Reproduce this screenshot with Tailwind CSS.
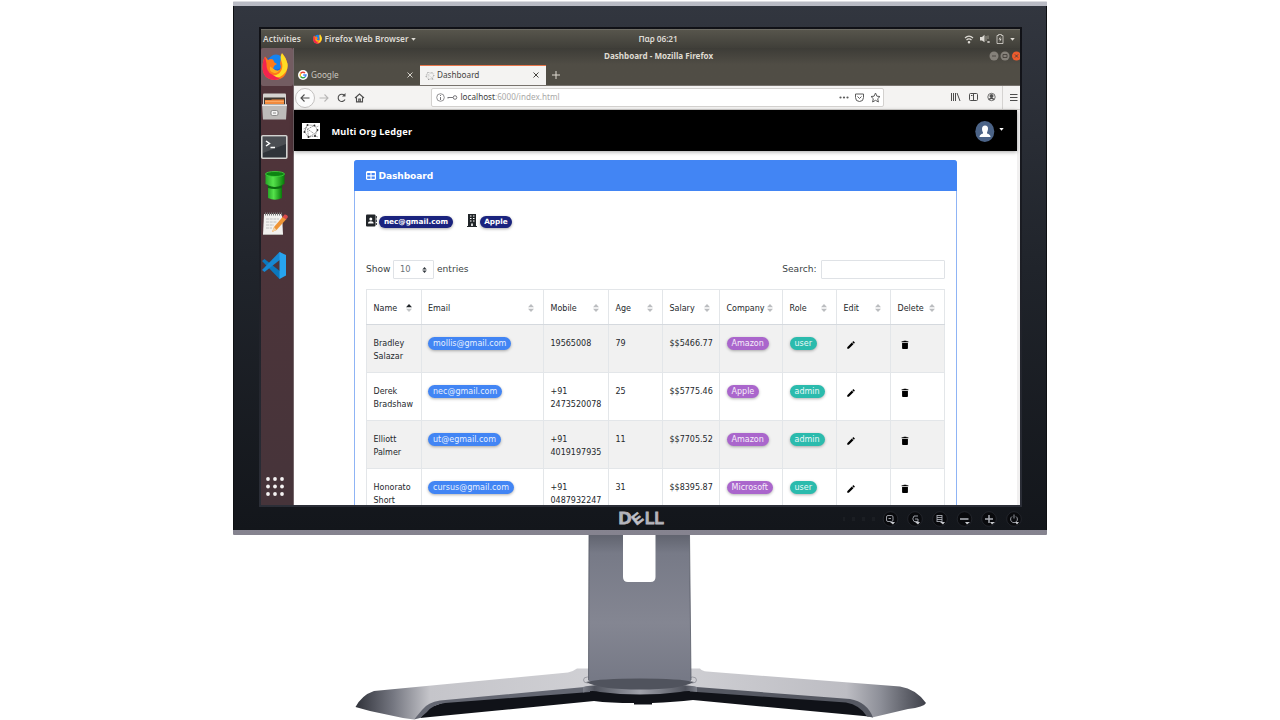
<!DOCTYPE html>
<html lang="en">
<head>
<meta charset="utf-8">
<title>Multi Org Ledger</title>
<script src="https://cdn.jsdelivr.net/npm/@tailwindcss/browser@4"></script>
</head>
<body class="w-[1280px] h-[720px] overflow-hidden bg-white font-['DejaVu_Sans',sans-serif]">
<svg class="hidden">
  <symbol id="firefox" viewBox="0 0 26 28">
    <circle cx="13" cy="15" r="11.5" fill="#1b63d8"/>
    <circle cx="14" cy="9.500" r="7.500" fill="#1583ef"/>
    <path d="M3 4L6 7.500Q8.500 6 11 7L12.500 10L15 11.500L12.500 13L11 16Q15 20 18 17Q19.500 14 18 11Q19 4 20.500 1Q26 8 25.500 15Q24 27 13 27.500Q1 27 .5 15Q.5 8 3 4Z" fill="#ff7a1a"/>
    <path d="M20 .5Q17.500 4 19.500 9Q22 16 17 21Q11 25 6 21Q10 27 17 25Q27 20 25.500 11Q24 5 20 .5Z" fill="#ffdc24"/>
    <path d="M3 4L4.500 11Q4 19 10 22Q14 25 18 25.500Q16 27.500 13 27.500Q1 27 .5 15Q.5 9 3 4Z" fill="#f4244f"/>
    <path d="M11 16Q15 20 18 17Q15 22 11 20Q7 19 8 14Z" fill="#ffb01f"/>
  </symbol>
  <symbol id="sort" viewBox="0 0 6 8"><path d="M3 0L6 3.200H0Z"/><path d="M3 8L6 4.800H0Z"/></symbol>
  <symbol id="pencil" viewBox="0 0 24 24"><path d="M3 17.250V21h3.750L17.810 9.940l-3.750-3.750zM20.710 7.040a1 1 0 0 0 0-1.410l-2.340-2.340a1 1 0 0 0-1.410 0l-1.830 1.830 3.750 3.750z"/></symbol>
  <symbol id="trash" viewBox="0 0 24 24"><path d="M5 19.500c0 1.100.9 2 2 2h10a2 2 0 0 0 2-2V7H5zM20 3h-4l-1-1H9L8 3H4v2.500h16z"/></symbol>
  <symbol id="mesh" viewBox="0 0 17 16"><g fill="none" stroke-width=".6"><path d="M5 2L12 2.500L15 7L12.500 13L6 14L2 9ZM5 2L3 5L2 9M12 2.500L5 6L6 14M5 6L12 11L15 7M6 14L12 11M3 5L1 6M14 4L16 3M13 13L15.500 14" stroke-dasharray="1.300 .6"/></g><g stroke="none"><circle cx="5" cy="2" r=".9"/><circle cx="12" cy="2.500" r=".9"/><circle cx="15" cy="7" r=".9"/><circle cx="12.500" cy="13" r="1.100"/><circle cx="6" cy="14" r="1"/><circle cx="2" cy="9" r="1"/></g></symbol>
</svg>

<div class="flex flex-col">
  <!-- monitor -->
  <div class="ml-[233px] mt-px w-[814px] h-[534px] shrink-0 bg-linear-to-b from-[#b9bbc4] to-[#85838f] pt-[4px] pb-[5px] border-t border-[#dcdde1] rounded-[1px]">
    <div class="h-[524px] bg-linear-to-b from-[#32363f] via-[#20242b] to-[#13161b] via-50% border-x border-[#0d0f12] pl-[25px] pr-[24px] pt-[21px] flex flex-col">
      <div class="w-[763px] h-[480px] bg-linear-to-b from-[#101116] to-[#2b2e37] p-[2px] shrink-0">
        <div class="w-[759px] h-[476px] overflow-hidden bg-white flex flex-col">
          <!-- GNOME bar -->
          <div class="h-[19px] shrink-0 bg-linear-to-b from-[#57554c] to-[#403f39] border-t border-[#6d6b63] flex items-center text-[#dedbd5] font-['Noto_Sans',sans-serif] font-semibold text-[8.300px] pl-[2px] pr-[5px] leading-none">
            <span class="w-[50px] tracking-[0.100px]">Activities</span>
            <svg class="w-[9px] h-[10px] mr-[2.500px]"><use href="#firefox"/></svg>
            <span class="w-[86px] whitespace-nowrap tracking-[0.050px]">Firefox Web Browser</span>
            <svg class="w-[5px] h-[3px]" viewBox="0 0 6 4"><path d="M0 0H6L3 3.500Z" fill="#dedbd5"/></svg>
            <span class="ml-[223px] tracking-[-0.100px]">Παρ 06:21</span>
            <div class="ml-auto flex items-center gap-[6px]">
              <svg class="w-[10px] h-[9px]" viewBox="0 0 10 9" fill="none" stroke="#dedbd5" stroke-width="1.200"><path d="M1 3Q5 -.8 9 3M2.500 5Q5 2.600 7.500 5"/><circle cx="5" cy="7.300" r=".7" fill="#dedbd5"/></svg>
              <svg class="w-[10px] h-[10px]" viewBox="0 0 10 10"><path d="M0 3H2L4.500.8V8.200L2 6.500H0Z" fill="#dedbd5"/><path d="M6 2V7M8 1.500V5" stroke="#9c998f"/><path d="M7.500 7L9.500 9M9.500 7L7.500 9" stroke="#dedbd5"/></svg>
              <svg class="w-[8px] h-[10px]" viewBox="0 0 8 10"><path d="M1 1.500H2.500V.5H5.500V1.500H7V9.500H1Z" fill="none" stroke="#dedbd5" stroke-width=".8"/><path d="M4.500 2.500L2.500 5.500H4L3.500 8L5.700 4.800H4.200Z" fill="#dedbd5"/></svg>
              <svg class="w-[5px] h-[3px]" viewBox="0 0 6 4"><path d="M0 0H6L3 3.500Z" fill="#dedbd5"/></svg>
            </div>
          </div>
          <div class="flex h-[457px]">
            <!-- dock -->
            <div class="w-[33px] shrink-0 border-r border-[#74666a] flex flex-col items-center pr-[5px] bg-linear-to-b from-[#52343a] to-[#46343a]">
              <div class="w-[32px] h-[38px] bg-[#735c61] rounded-[2px] -mr-[5px] flex justify-center pt-[4px] pr-[5px]"><svg class="w-[26px] h-[29px]"><use href="#firefox"/></svg></div>
              <svg class="w-[25px] h-[27px] mt-[7px]" viewBox="0 0 25 27"><rect x="1" y=".5" width="23" height="13" rx="1" fill="#d5d3d0"/><rect x="2" y="4.500" width="21" height="8" fill="#413831"/><path d="M3 7H9L10 6.500H22V11H3Z" fill="#f08a3e"/><path d="M3 8.500H22" stroke="#ffb474" stroke-width=".7"/><path d="M0 11.500H25L24 26.500H1Z" fill="#bdbbb9"/><path d="M0 11.500H25V13H0Z" fill="#e7e6e5"/><rect x="9" y="17.500" width="7" height="5" rx="1.500" fill="#f4f4f3" stroke="#777" stroke-width=".8"/><path d="M11 20H14" stroke="#888"/></svg>
              <svg class="w-[27px] h-[24px] mt-[15px]" viewBox="0 0 27 24"><rect x=".8" y=".8" width="25" height="22.400" rx="1" fill="#30343a" stroke="#d2d2d0" stroke-width="1.600"/><path d="M2 2H25V9L2 18Z" fill="#4b4e53"/><path d="M5 6L8.500 8.500L5 11M9.500 12.500H14" fill="none" stroke="#fff" stroke-width="1.500"/></svg>
              <svg class="w-[20px] h-[30px] mt-[12px]" viewBox="0 0 20 30"><defs><linearGradient id="pipe"><stop offset="0" stop-color="#27a827"/><stop offset=".4" stop-color="#55e34b"/><stop offset="1" stop-color="#087c09"/></linearGradient></defs><path d="M3 11H17V27Q10 30.500 3 27Z" fill="url(#pipe)"/><path d="M2.500 14Q10 18 17.500 14L17 17Q10 19 3 17Z" fill="#0b6b10"/><path d="M.5 3V13Q10 17.500 19.500 13V3Z" fill="url(#pipe)"/><ellipse cx="10" cy="3" rx="9.500" ry="2.500" fill="#0d8312" stroke="#41d53c" stroke-width=".8"/></svg>
              <svg class="w-[26px] h-[24px] mt-[11px]" viewBox="0 0 26 24"><path d="M2 2H20L21 22.500H1Z" fill="#f1f0ee"/><path d="M1 22.500H21" stroke="#b7b5b2"/><path d="M3 2H20" stroke="#777" stroke-width="3" stroke-dasharray="1 1"/><path d="M4 7H17M4 10H15M4 13H12M4 16H10" stroke="#b3b3b3" stroke-width=".8" stroke-dasharray="3 .7"/><path d="M10 20L12 15L21 4.500L24.500 7L14.500 18Z" fill="#ee9436"/><path d="M20.500 5L22.500 2.500Q25.500 2 26 5L24 7.500Z" fill="#d94b4b"/><path d="M10 20L12 15L14.500 18Z" fill="#f4d2a2"/></svg>
              <svg class="w-[25px] h-[27px] mt-[16px]" viewBox="0 0 25 27"><path d="M0 9L2.500 7L19 20V25.500L17.500 27Z" fill="#0b77bd"/><path d="M0 18L2.500 20L19 7V1L17.500 0Z" fill="#1688d2"/><path d="M17.500 0L24 3V23.500L17.500 27Z" fill="#27a4ef"/></svg>
              <svg class="w-[18px] h-[19px] mt-auto mb-[9.500px]" viewBox="0 0 18 19" fill="#f5f3f3"><circle cx="2" cy="2" r="1.900"/><circle cx="9" cy="2" r="1.900"/><circle cx="16" cy="2" r="1.900"/><circle cx="2" cy="9.500" r="1.900"/><circle cx="9" cy="9.500" r="1.900"/><circle cx="16" cy="9.500" r="1.900"/><circle cx="2" cy="17" r="1.900"/><circle cx="9" cy="17" r="1.900"/><circle cx="16" cy="17" r="1.900"/></svg>
            </div>
            <!-- browser -->
            <div class="w-[726px] flex flex-col font-['Noto_Sans',sans-serif]">
              <div class="h-[37px] shrink-0 bg-linear-to-b from-[#3d3c37] to-[#504d45] to-45% flex flex-col">
                <div class="h-[17px] flex items-center text-[#dfdbd2] font-bold text-[8.100px] leading-none pb-px">
                  <span class="ml-[310px] w-[112px] whitespace-nowrap">Dashboard - Mozilla Firefox</span>
                  <svg class="ml-auto w-[31px] h-[10px]" viewBox="0 0 31 10"><circle cx="5" cy="5" r="4.500" fill="#85817a"/><circle cx="16" cy="5" r="4.500" fill="#85817a"/><circle cx="27.500" cy="5" r="4.500" fill="#ee5b2d"/><path d="M3 5H7M14 3.500H18V6.500H14ZM26 3.500L29 6.500M29 3.500L26 6.500" fill="none" stroke="#45423c" stroke-width=".9"/></svg>
                </div>
                <div class="h-[20px] flex text-[8.200px] leading-none items-center">
                  <div class="w-[126px] flex items-center pl-[4px] pr-[7px] text-[#c9c6bf]">
                    <svg class="w-[10px] h-[10px] mr-[3px]" viewBox="0 0 10 10"><circle cx="5" cy="5" r="5" fill="#fff"/><g fill="none" stroke-width="1.400"><path d="M7 3A2.900 2.900 0 0 0 2.600 3.500" stroke="#ea4335"/><path d="M2.600 3.500A2.900 2.900 0 0 0 2.600 6.500" stroke="#fbbc05"/><path d="M2.600 6.500A2.900 2.900 0 0 0 7 7" stroke="#34a853"/><path d="M7 7Q8 6 8 5H5.200" stroke="#4285f4"/></g></svg>
                    <span>Google</span>
                    <svg class="ml-auto w-[6px] h-[6px]" viewBox="0 0 6 6"><path d="M.5.5L5.500 5.500M5.500.5L.5 5.500" stroke="#d5d2cb"/></svg>
                  </div>
                  <div class="w-[126px] h-[20px] bg-[#f4f3f2] border-t border-[#e8754a] flex items-center pl-[5px] pr-[7px] text-[#45433f]">
                    <svg class="w-[10px] h-[10px] mr-[2px]" stroke="#999" fill="#999"><use href="#mesh"/></svg>
                    <span>Dashboard</span>
                    <svg class="ml-auto w-[6px] h-[6px] -mt-px" viewBox="0 0 6 6"><path d="M.5.5L5.500 5.500M5.500.5L.5 5.500" stroke="#45433f"/></svg>
                  </div>
                  <svg class="ml-[6px] w-[8px] h-[8px]" viewBox="0 0 8 8"><path d="M4 0V8M0 4H8" stroke="#dfdbd2"/></svg>
                </div>
              </div>
              <div class="h-[25px] shrink-0 bg-[#f4f3f2] border-t border-b border-t-[#77726d] border-b-[#d4d2cf] flex items-center text-[8.100px] leading-none">
                <svg class="w-[76px] h-[22px] ml-[1px]" viewBox="0 0 76 22" fill="none" stroke="#4d4d4d" stroke-width="1.100"><circle cx="10" cy="11" r="9.500" fill="#fbfbfb" stroke="#b5b3b1" stroke-width=".8"/><path d="M14.500 11H6M9.500 7.500L6 11L9.500 14.500"/><path d="M24.500 11H33M29.500 7.500L33 11L29.500 14.500" stroke="#b8b7b6"/><path d="M49.500 8.500A3.600 3.600 0 1 0 50 12.500"/><path d="M50.500 6V9.500H47Z" fill="#4d4d4d" stroke="none"/><path d="M60 11L64.500 7L69 11M61.500 10.500V14.900H67.500V10.500M63.800 15V12H65.300V15"/></svg>
                <div class="ml-[60px] w-[453px] h-[19px] bg-white border border-[#d3d1cf] rounded-[2px] flex items-center text-[#aaa9a8] pl-[4px] pr-[2px]">
                  <svg class="w-[23px] h-[9px] mr-[1.500px]" viewBox="0 0 23 9" fill="none" stroke="#77767a"><circle cx="4.500" cy="4.500" r="3.800" stroke-width=".8"/><path d="M4.500 4V7M4.500 2V3M12 4.500H17M12 4V5.500"/><circle cx="19" cy="4.500" r="1.800"/></svg>
                  <span class="tracking-[0.030px]"><span class="text-[#3d3d3d]">localhost</span>:6000/index.html</span>
                  <svg class="ml-auto w-[44px] h-[11px]" viewBox="0 0 44 11" fill="none" stroke="#5c5c5c"><g fill="#5c5c5c" stroke="none"><circle cx="3.500" cy="5.500" r="1.100"/><circle cx="7" cy="5.500" r="1.100"/><circle cx="10.500" cy="5.500" r="1.100"/></g><path d="M18.500 2H26.500V5.500A4 4 0 0 1 18.500 5.500ZM20.500 4.500L22.500 6.500L24.500 4.500"/><path d="M38.500 1L39.900 4.200L43 4.500L40.700 6.700L41.400 10L38.500 8.300L35.600 10L36.300 6.700L34 4.500L37.100 4.200Z"/></svg>
                </div>
                <svg class="ml-[66px] w-[69px] h-[23px] shrink-0" viewBox="0 0 69 23" fill="none" stroke="#4d4d4d"><path d="M1.500 7V15M3.500 7V15M5.500 7V15M7 7L10 15"/><rect x="19.500" y="7.500" width="8" height="7" rx="1"/><path d="M23.500 7.500V14.500M21 9.500H22.500"/><circle cx="41.500" cy="11" r="3.700" stroke-width=".8"/><circle cx="41.500" cy="10" r="1.500" fill="#4d4d4d"/><path d="M39 13.500Q41.500 11 44 13.500" stroke-width="1.500"/><path d="M52.500 0V23" stroke="#d5d3d1"/><path d="M60 8.500H67.500M60 11.500H67.500M60 14.500H67.500"/></svg>
              </div>
              <!-- page -->
              <div class="h-[395px] flex bg-[#f1f0f0] font-['DejaVu_Sans',sans-serif]">
                <div class="w-[723px] bg-white flex flex-col text-[#3a3f44]">
                  <div class="h-[41px] shrink-0 bg-black flex items-center pl-[8px] pr-[13px] shadow-[0_1px_4px_rgba(0,0,0,.35)] pt-px">
                    <svg class="w-[18px] h-[16px] bg-white" stroke="#555" fill="#333"><use href="#mesh"/></svg>
                    <span class="ml-[11.500px] mt-px text-white font-bold text-[9.200px] font-['Noto_Sans',sans-serif] tracking-[0.180px]">Multi Org Ledger</span>
                    <svg class="ml-auto w-[20px] h-[21px]" viewBox="0 0 20 21"><ellipse cx="9.800" cy="10.500" rx="9.500" ry="10.500" fill="#4b6387"/><path d="M10 4.500Q13.300 4.500 13 8.200Q12.500 10.500 12 11.500L12 12.500Q15.500 13.500 15.500 16H4.500Q4.500 13.500 8 12.500V11.500Q7 10 7 8Q7 4.500 10 4.500Z" fill="#fff"/></svg>
                    <svg class="ml-[4px] w-[5px] h-[3px] -mt-[4px]" viewBox="0 0 5 3"><path d="M.3 0H4.700L2.500 2.700Z" fill="#fff"/></svg>
                  </div>
                  <div class="ml-[60px] mt-[9px] w-[603px] h-[400px] shrink-0 border border-[#8fb4f5] rounded-[3px] flex flex-col">
                    <div class="-mx-px -mt-px h-[31px] shrink-0 bg-[#4285f4] rounded-t-[3px] text-white font-bold text-[9.100px] flex items-center pl-[12px] pt-px">
                      <svg class="w-[10px] h-[9px] mr-[2.500px] -mt-px" viewBox="0 0 10 9"><rect x=".6" y=".6" width="8.800" height="7.800" rx=".7" fill="none" stroke="#fff" stroke-width="1.200"/><path d="M1 1.500H9M5 1V8M1 4.900H9" stroke="#fff" stroke-width="1.100"/></svg>
                      <span class="mt-px tracking-[-0.100px]">Dashboard</span>
                    </div>
                    <div class="px-[11px] flex flex-col">
                      <div class="mt-[22px] h-[18px] flex items-center text-white font-bold text-[7.300px] leading-none">
                        <svg class="w-[11px] h-[13px] -mt-[3px]" viewBox="0 0 11 13"><rect x="0" y=".5" width="9.500" height="12" rx="1" fill="#212529"/><path d="M10.300 2V4.500M10.300 5.500V8M10.300 9V11" stroke="#212529" stroke-width="1"/><circle cx="4.800" cy="5" r="1.500" fill="#fff"/><path d="M2 9.500Q2 7.200 4.800 7.200T7.600 9.500Z" fill="#fff"/></svg>
                        <span class="ml-[2px] w-[74px] h-[12px] rounded-full bg-[#1a237e] flex items-center justify-center shadow-[0_1px_3px_rgba(0,0,0,.35)]">nec@gmail.com</span>
                        <svg class="ml-[14px] w-[10px] h-[13px] -mt-[3px]" viewBox="0 0 10 13"><path d="M1 0H9V12H10V13H0V12H1Z" fill="#212529"/><path d="M3 2H7.500M3 4.500H7.500M3 7H7.500" stroke="#fff" stroke-width="1.200" stroke-dasharray="1.500"/><path d="M4.200 9.500H5.800V12H4.200Z" fill="#fff"/></svg>
                        <span class="ml-[3px] w-[32px] h-[12px] rounded-full bg-[#1a237e] flex items-center justify-center shadow-[0_1px_3px_rgba(0,0,0,.35)]">Apple</span>
                      </div>
                      <div class="mt-[28px] h-[20px] flex items-center text-[9.100px] leading-none">
                        <span class="mt-px w-[24px] whitespace-nowrap">Show</span>
                        <span class="ml-[3px] w-[41px] h-[19px] border border-[#dfe2e6] rounded-[1px] flex items-center text-[#6b7177] text-[8.300px] pt-px pl-[6px] pr-[6px] justify-between">10<svg class="w-[5px] h-[6px]" fill="#343a40"><use href="#sort"/></svg></span>
                        <span class="ml-[3px] mt-px">entries</span>
                        <span class="ml-auto mt-px">Search:</span>
                        <span class="ml-[4.500px] w-[124px] h-[19px] border border-[#dfe2e6] rounded-[1px]"></span>
                      </div>
                      <table class="mt-[10px] w-[578px] table-fixed border-collapse text-[8px] leading-[13px] text-[#24282c]">
                        <colgroup><col class="w-[54.500px]"><col class="w-[122.500px]"><col class="w-[65px]"><col class="w-[54px]"><col class="w-[57px]"><col class="w-[63px]"><col class="w-[54px]"><col class="w-[54px]"><col class="w-[54px]"></colgroup>
                        <thead><tr id="head"></tr></thead>
                        <tbody id="rows"></tbody>
                      </table>
                    </div>
                  </div>
                </div>
              </div>
            </div>
          </div>
        </div>
      </div>
      <!-- lower bezel -->
      <div class="h-[23px] flex items-center pl-[359px]">
        <svg class="w-[48px] h-[18px] shrink-0 overflow-visible" viewBox="0 0 48 18" font-family="Liberation Sans, sans-serif" font-weight="700" font-size="16" fill="#b4b4bc" stroke="#b4b4bc" stroke-width=".8"><text x="0.500" y="14" textLength="13" lengthAdjust="spacingAndGlyphs">D</text><text x="27" y="14" textLength="19" lengthAdjust="spacingAndGlyphs">LL</text><text x="-5.300" y="5" transform="translate(19.500 8.300) rotate(-38)" font-size="14.500" fill="#c6c6cd">E</text></svg>
        <svg class="ml-[177px] w-[180px] h-[20px] shrink-0 overflow-visible" viewBox="0 0 180 20"><g fill="#090a0d" stroke="#2a2d33" stroke-width=".7"><circle cx="47.500" cy="10" r="7.300"/><circle cx="72" cy="10" r="7.300"/><circle cx="97" cy="10" r="7.300"/><circle cx="121.500" cy="10" r="7.300"/><circle cx="146" cy="10" r="7.300"/><circle cx="171" cy="10" r="7.300"/></g>
          <g transform="translate(-4 0)"><g fill="none" stroke="#a9acb3" stroke-width=".9"><rect x="47.500" y="6.500" width="6.500" height="6" rx="1.500"/><path d="M52 9.500H49.500"/><path d="M79 7H75Q72.500 10 75 12.500H79M76 10H79V13"/><path d="M98 6.500H103M98 8.500H103M98 10.500H103M98 12.500H103M98 6V13M103 6V13"/><path d="M121 10H129.500" stroke-width="1.600"/><path d="M146 10H154M150 6V14" stroke-width="1.500"/><path d="M173 7.500A3.400 3.400 0 1 0 177 7.500M175 5.500V9.500"/></g>
          <path d="M51 13H56L54 15.500ZM76 13H81L79 15.500ZM101 13H106L104 15.500ZM126 13H131L128 15.500ZM151 13H156L153 15.500ZM176 13H180L178 15.500Z" fill="#c6c8cd"/></g>
          <g fill="#1b1e23"><rect x="0" y="8" width="2" height="4"/><rect x="9" y="8" width="3" height="4"/><rect x="19" y="8" width="3" height="4"/><rect x="29" y="8" width="3" height="4"/></g></svg>
      </div>
    </div>
  </div>
  <!-- stand -->
  <svg class="ml-[350px] w-[580px] h-[185px] shrink-0" viewBox="350 535 580 185">
    <defs>
      <linearGradient id="col" x2="0" y2="1"><stop offset="0" stop-color="#60636e"/><stop offset=".13" stop-color="#777a87"/><stop offset=".6" stop-color="#848692"/><stop offset="1" stop-color="#757885"/></linearGradient>
      <linearGradient id="armL"><stop offset="0" stop-color="#30323a"/><stop offset=".13" stop-color="#747680"/><stop offset=".26" stop-color="#c5c5ca"/><stop offset="1" stop-color="#d3d3d7"/></linearGradient>
      <linearGradient id="armR"><stop offset="0" stop-color="#d3d3d7"/><stop offset=".72" stop-color="#bdbdc3"/><stop offset=".84" stop-color="#8d8f98"/><stop offset="1" stop-color="#3e4049"/></linearGradient>
      <linearGradient id="hub"><stop offset="0" stop-color="#7d808a"/><stop offset=".1" stop-color="#50535d"/><stop offset=".5" stop-color="#a0a2ab"/><stop offset=".9" stop-color="#50535d"/><stop offset="1" stop-color="#7d808a"/></linearGradient>
    </defs>
    <path d="M355.500 707Q362 695 374 691L568 672.500Q573 671.500 577 668.500H642V690H590L440 702.500Q428 704 422 712L414 719.500L403 718L370 711Z" fill="url(#armL)"/>
    <path d="M642 668.500H700Q702 671 707 671.500L900 686.500Q916 689 926 703Q924 707 908 709L872 717.500Q866 705 850 701.500L690 690H642Z" fill="url(#armR)"/>
    <path d="M420 718L428 708L445 702L590 688H690L850 700L864 706L869 716.500L853 715L693 700Q675 702 652 703V704.500H634V703Q610 703 594 701L430 717Z" fill="#101218"/>
    <path d="M414 719.500L422 710Q428 702 440 700.500L590 686.500V692L445 703Q432 705 427 712L420 718Z" fill="#646772"/>
    <path d="M690 686.500L850 699Q867 702 873 717.500L867 716.500Q860 705 846 702.500L690 691.500Z" fill="#555862"/>
    <path d="M583 687Q592 684 640 684T697 687V692Q688 690 680 692Q660 694.500 640 694.500T600 692Q592 690 583 692.500Z" fill="url(#hub)"/>
    <ellipse cx="587.500" cy="680" rx="4" ry="3" fill="none" stroke="#85878f" stroke-width=".7"/>
    <ellipse cx="692.500" cy="680" rx="4" ry="3" fill="none" stroke="#85878f" stroke-width=".7"/>
    <path d="M589 534H623V577Q623 582 628 582H650.500Q655.500 582 655.500 577V534H689.500L691 681Q640 684 588.500 681Z" fill="url(#col)"/>
    <path d="M586 682Q600 678.500 640 678.500T694 682Q680 689.500 640 689.500T586 682Z" fill="#50535d"/>
    <path d="M589 534L588.500 680M689.500 534L691 680" stroke="#565964" stroke-width=".8"/>
  </svg>
</div>

<script>
const cols = ['Name','Email','Mobile','Age','Salary','Company','Role','Edit','Delete'];
document.getElementById('head').innerHTML = cols.map((c, i) =>
  `<th class="h-[34.500px] border border-[#e3e6e9] border-b-[#d5d9de] font-normal text-left pl-[6.500px] pr-0 align-middle"><div class="flex items-center pt-[2px]"><span class="pt-px">${c}</span>` +
  (i === 0
    ? `<svg class="ml-auto mr-[9px] w-[6px] h-[8px]" viewBox="0 0 6 8"><path d="M3 0L6 3.200H0Z" fill="#212529"/><path d="M3 8L6 4.800H0Z" fill="#c3c5c7"/></svg>`
    : `<svg class="ml-auto mr-[9px] w-[6px] h-[8px]" fill="#bbbdc0"><use href="#sort"/></svg>`) +
  `</div></th>`).join('');
const data = [
  ['Bradley<br>Salazar','mollis@gmail.com','19565008','79','$$5466.77','Amazon','user'],
  ['Derek<br>Bradshaw','nec@gmail.com','+91<br>2473520078','25','$$5775.46','Apple','admin'],
  ['Elliott<br>Palmer','ut@egmail.com','+91<br>4019197935','11','$$7705.52','Amazon','admin'],
  ['Honorato<br>Short','cursus@gmail.com','+91<br>0487932247','31','$$8395.87','Microsoft','user'],
];
const pills = {
  1: 'inline-flex items-center h-[13px] px-[5px] rounded-full bg-[#4285f4] text-[#e6effe] shadow-[0_1px_3px_rgba(0,0,0,.3)] whitespace-nowrap',
  5: 'inline-flex items-center h-[13px] px-[5px] rounded-full bg-[#aa66cc] text-[#f6eefa] shadow-[0_1px_3px_rgba(0,0,0,.3)] whitespace-nowrap',
  6: 'inline-flex items-center h-[13px] px-[5px] rounded-full bg-[#2bbbad] text-[#e9f8f7] shadow-[0_1px_3px_rgba(0,0,0,.3)] whitespace-nowrap',
};
document.getElementById('rows').innerHTML = data.map(r =>
  `<tr class="h-[48.200px] odd:bg-[#f1f1f1]">` +
  r.map((v, i) => `<td class="border border-[#e3e6e9] align-top pl-[6.500px] pt-[12px] pr-0 pb-0">${pills[i] ? `<span class="${pills[i]}">${v}</span>` : v}</td>`).join('') +
  `<td class="border border-[#e3e6e9] align-top pl-[9px] pt-[15px]"><svg class="w-[10px] h-[10px]"><use href="#pencil"/></svg></td>` +
  `<td class="border border-[#e3e6e9] align-top pl-[9px] pt-[15px]"><svg class="w-[10px] h-[10px]"><use href="#trash"/></svg></td></tr>`).join('');
</script>
</body>
</html>
